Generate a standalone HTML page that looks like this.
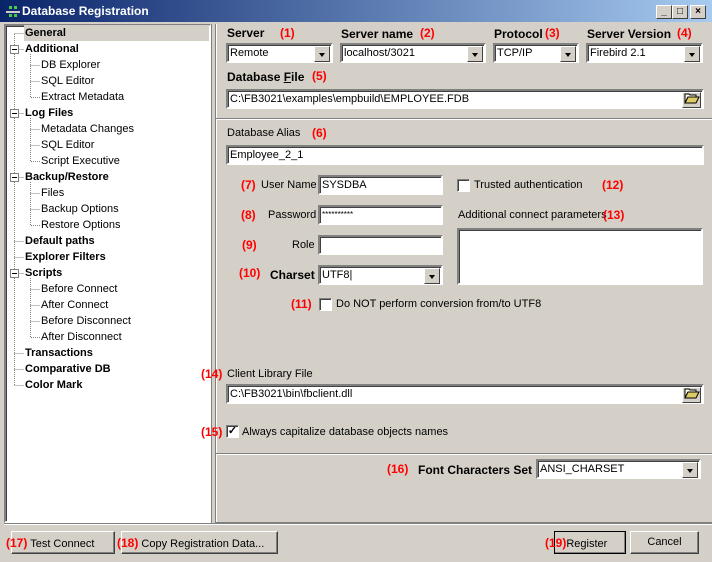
<!DOCTYPE html>
<html><head><style>
*{box-sizing:border-box;margin:0;padding:0}
body{width:712px;height:562px;background:#d4d0c8;font-family:"Liberation Sans",sans-serif;font-size:11px;color:#000;position:relative;overflow:hidden}
.a{position:absolute;white-space:nowrap}
.title{left:0;top:0;width:712px;height:22px;background:linear-gradient(90deg,#0a246a,#a6caf0);color:#fff;font-weight:bold;font-size:12px;line-height:22px;padding-left:22px}
.tb{top:5px;width:16px;height:14px;background:#d4d0c8;border:1px solid;border-color:#fff #404040 #404040 #fff;font-size:10px;line-height:12px;text-align:center;color:#000;font-weight:bold}
.sunk{background:#fff;border:2px solid;border-color:#808080 #fff #fff #808080;box-shadow:inset 1px 1px 0 #404040}
.edit{height:20px;line-height:16px;padding-left:2px}
.drop{position:absolute;right:1px;top:1px;width:16px;height:16px;background:#d4d0c8;border:1px solid;border-color:#fff #404040 #404040 #fff}
.drop:after{content:"";position:absolute;left:4px;top:6px;border:3px solid transparent;border-top:4px solid #000;border-bottom:0}
.b{font-weight:bold}
.r{color:#f00;font-weight:bold}
.tree div{position:absolute;white-space:nowrap;line-height:16px;height:16px}
.cb{width:13px;height:13px;background:#fff;border:1px solid;border-color:#808080 #fff #fff #808080;box-shadow:inset 1px 1px 0 #404040}
.btn{height:23px;border:1px solid;border-color:#fff #404040 #404040 #fff;box-shadow:inset -1px -1px 0 #808080;text-align:center;line-height:20px}
.sep{height:2px;border-top:1px solid #808080;border-bottom:1px solid #fff}
</style></head><body>
<div class="a title">Database Registration</div>
<div class="a" style="left:6px;top:6px;width:12px;height:10px">
<svg width="14" height="12"><rect x="3" y="0" width="3" height="3" fill="#4c4"/><rect x="8" y="0" width="3" height="3" fill="#4c4"/><rect x="0" y="5" width="14" height="2" fill="#ccc"/><rect x="3" y="8" width="3" height="3" fill="#4c4"/><rect x="8" y="8" width="3" height="3" fill="#4c4"/></svg></div>
<div class="a tb" style="left:656px">_</div>
<div class="a tb" style="left:672px">□</div>
<div class="a tb" style="left:690px">×</div>

<div class="a sunk" style="left:4px;top:24px;width:207px;height:499px"></div>
<div class="a" style="left:24px;top:25px;width:185px;height:16px;background:#d4d0c8"></div>
<div class="tree">
<div style="left:25px;top:25px" class="b">General</div>
<div style="left:25px;top:41px" class="b">Additional</div>
<div style="left:41px;top:57px">DB Explorer</div>
<div style="left:41px;top:73px">SQL Editor</div>
<div style="left:41px;top:89px">Extract Metadata</div>
<div style="left:25px;top:105px" class="b">Log Files</div>
<div style="left:41px;top:121px">Metadata Changes</div>
<div style="left:41px;top:137px">SQL Editor</div>
<div style="left:41px;top:153px">Script Executive</div>
<div style="left:25px;top:169px" class="b">Backup/Restore</div>
<div style="left:41px;top:185px">Files</div>
<div style="left:41px;top:201px">Backup Options</div>
<div style="left:41px;top:217px">Restore Options</div>
<div style="left:25px;top:233px" class="b">Default paths</div>
<div style="left:25px;top:249px" class="b">Explorer Filters</div>
<div style="left:25px;top:265px" class="b">Scripts</div>
<div style="left:41px;top:281px">Before Connect</div>
<div style="left:41px;top:297px">After Connect</div>
<div style="left:41px;top:313px">Before Disconnect</div>
<div style="left:41px;top:329px">After Disconnect</div>
<div style="left:25px;top:345px" class="b">Transactions</div>
<div style="left:25px;top:361px" class="b">Comparative DB</div>
<div style="left:25px;top:377px" class="b">Color Mark</div>
</div>
<svg class="a" style="left:6px;top:26px" width="40" height="370">
<g stroke="#808080" stroke-dasharray="1 1" fill="none">
<path d="M8.5 8V359M8.5 7.5H18M8.5 23.5H18M8.5 87.5H18M8.5 151.5H18M8.5 215.5H18M8.5 231.5H18M8.5 247.5H18M8.5 327.5H18M8.5 343.5H18M8.5 359.5H18"/>
<path d="M24.5 28V71.5H34M24.5 39.5H34M24.5 55.5H34M24.5 92V135.5H34M24.5 103.5H34M24.5 119.5H34M24.5 156V199.5H34M24.5 167.5H34M24.5 183.5H34M24.5 252V311.5H34M24.5 263.5H34M24.5 279.5H34M24.5 295.5H34"/>
</g>
<g fill="#fff" stroke="#808080"><rect x="4.5" y="19.5" width="8" height="8"/><rect x="4.5" y="83.5" width="8" height="8"/><rect x="4.5" y="147.5" width="8" height="8"/><rect x="4.5" y="243.5" width="8" height="8"/></g>
<g stroke="#000"><path d="M6 23.5h5M6 87.5h5M6 151.5h5M6 247.5h5"/></g>
</svg>
<div class="a" style="left:211px;top:24px;width:1px;height:499px;background:#808080"></div>
<div class="a" style="left:215px;top:24px;width:1px;height:499px;background:#808080"></div>
<div class="a" style="left:216px;top:24px;width:1px;height:499px;background:#fff"></div>
<div class="a" style="left:216px;top:522px;width:496px;height:1px;background:#808080"></div>
<div class="a" style="left:4px;top:523px;width:708px;height:1px;background:#808080"></div>
<div class="a" style="left:4px;top:524px;width:708px;height:1px;background:#fff"></div>

<div class="a b" style="left:227px;top:26px;font-size:12px">Server</div><div class="a r" style="left:280px;top:26px;font-size:12px">(1)</div>
<div class="a b" style="left:341px;top:27px;font-size:12px">Server name</div><div class="a r" style="left:420px;top:26px;font-size:12px">(2)</div>
<div class="a b" style="left:494px;top:27px;font-size:12px">Protocol</div><div class="a r" style="left:545px;top:26px;font-size:12px">(3)</div>
<div class="a b" style="left:587px;top:27px;font-size:12px">Server Version</div><div class="a r" style="left:677px;top:26px;font-size:12px">(4)</div>
<div class="a sunk edit" style="left:226px;top:43px;width:107px">Remote<div class="drop"></div></div>
<div class="a sunk edit" style="left:340px;top:43px;width:146px">localhost/3021<div class="drop"></div></div>
<div class="a sunk edit" style="left:493px;top:43px;width:86px">TCP/IP<div class="drop"></div></div>
<div class="a sunk edit" style="left:586px;top:43px;width:117px">Firebird 2.1<div class="drop"></div></div>
<div class="a b" style="left:227px;top:70px;font-size:12px">Database <u>F</u>ile</div><div class="a r" style="left:312px;top:69px;font-size:12px">(5)</div>
<div class="a sunk edit" style="left:226px;top:89px;width:478px">C:\FB3021\examples\empbuild\EMPLOYEE.FDB<div class="drop" style="width:19px;height:16px"></div></div>
<div class="a sep" style="left:216px;top:118px;width:496px"></div>
<div class="a" style="left:227px;top:127px">Database Alias</div><div class="a r" style="left:312px;top:126px;font-size:12px">(6)</div>
<div class="a sunk edit" style="left:226px;top:145px;width:478px">Employee_2_1</div>

<div class="a r" style="left:241px;top:178px;font-size:12px">(7)</div><div class="a" style="left:261px;top:179px">User Name</div>
<div class="a sunk edit" style="left:318px;top:175px;width:125px">SYSDBA</div>
<div class="a r" style="left:241px;top:208px;font-size:12px">(8)</div><div class="a" style="left:268px;top:209px">Password</div>
<div class="a sunk edit" style="left:318px;top:205px;width:125px;font-size:8px">**********</div>
<div class="a r" style="left:242px;top:238px;font-size:12px">(9)</div><div class="a" style="left:292px;top:239px">Role</div>
<div class="a sunk edit" style="left:318px;top:235px;width:125px"></div>
<div class="a r" style="left:239px;top:266px;font-size:12px">(10)</div><div class="a b" style="left:270px;top:268px;font-size:12px">Charset</div>
<div class="a sunk edit" style="left:318px;top:265px;width:125px">UTF8|<div class="drop"></div></div>
<div class="a cb" style="left:457px;top:179px"></div><div class="a" style="left:474px;top:179px">Trusted authentication</div><div class="a r" style="left:602px;top:178px;font-size:12px">(12)</div>
<div class="a" style="left:458px;top:209px">Additional connect parameters</div><div class="a r" style="left:603px;top:208px;font-size:12px">(13)</div>
<div class="a sunk" style="left:457px;top:228px;width:246px;height:57px"></div>
<div class="a r" style="left:291px;top:297px;font-size:12px">(11)</div><div class="a cb" style="left:319px;top:298px"></div><div class="a" style="left:336px;top:298px">Do NOT perform conversion from/to UTF8</div>

<div class="a r" style="left:201px;top:367px;font-size:12px">(14)</div><div class="a" style="left:227px;top:368px">Client Library File</div>
<div class="a sunk edit" style="left:226px;top:384px;width:478px">C:\FB3021\bin\fbclient.dll<div class="drop" style="width:19px;height:16px"></div></div>
<svg class="a" style="left:684px;top:91px" width="16" height="14"><path d="M1 3h4l1 1h6v2H4L1 12z" fill="#ffe" stroke="#000"/><path d="M4 6h11l-3 6H1z" fill="#dc6" stroke="#000"/></svg>
<svg class="a" style="left:684px;top:386px" width="16" height="14"><path d="M1 3h4l1 1h6v2H4L1 12z" fill="#ffe" stroke="#000"/><path d="M4 6h11l-3 6H1z" fill="#dc6" stroke="#000"/></svg>
<div class="a r" style="left:201px;top:425px;font-size:12px">(15)</div><div class="a cb" style="left:226px;top:425px;font-size:11px;line-height:10px;text-align:center;font-weight:bold">✓</div><div class="a" style="left:242px;top:426px">Always capitalize database objects names</div>
<div class="a sep" style="left:216px;top:453px;width:496px"></div>
<div class="a r" style="left:387px;top:462px;font-size:12px">(16)</div><div class="a b" style="left:418px;top:463px;font-size:12px">Font Characters Set</div>
<div class="a sunk edit" style="left:536px;top:459px;width:165px">ANSI_CHARSET<div class="drop"></div></div>

<div class="a btn" style="left:11px;top:531px;width:104px"></div><div class="a" style="left:6px;top:536px"><span class="r" style="font-size:12px">(17)</span> Test Connect</div>
<div class="a btn" style="left:121px;top:531px;width:157px"></div><div class="a" style="left:117px;top:536px"><span class="r" style="font-size:12px">(18)</span> Copy Registration Data...</div>
<div class="a btn" style="left:554px;top:531px;width:72px;border:1px solid #000"></div><div class="a" style="left:545px;top:536px"><span class="r" style="font-size:12px">(19)</span>Register</div>
<div class="a btn" style="left:630px;top:531px;width:69px">Cancel</div>
</body></html>
